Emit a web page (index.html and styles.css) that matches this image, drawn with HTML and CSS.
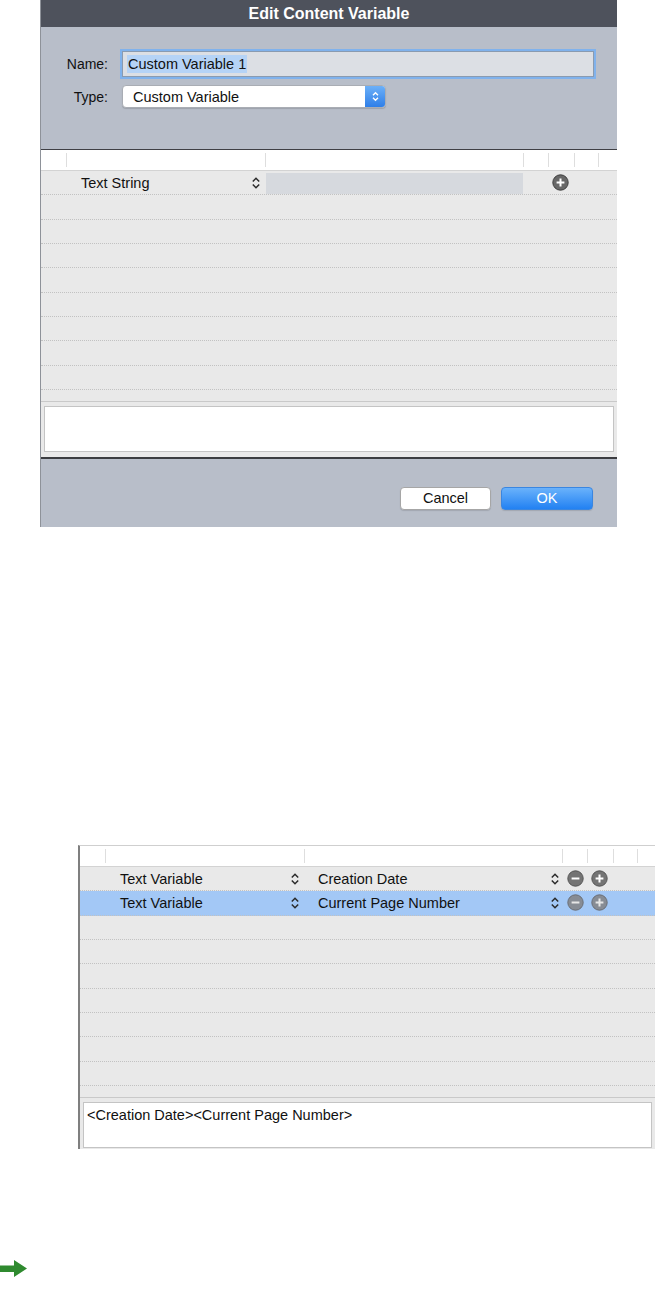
FILE: index.html
```html
<!DOCTYPE html>
<html lang="en">
<head>
    <meta charset="UTF-8">
    <title>Edit Content Variable</title>
    <link rel="stylesheet" href="styles.css">
</head>
<body>
    <div class="dialog">
        <div class="titlebar">Edit Content Variable</div>

        <div class="form">
            <div class="form-row">
                <label>Name:</label>
                <div class="text-field"><span class="sel">Custom Variable 1</span></div>
            </div>
            <div class="form-row">
                <label>Type:</label>
                <div class="popup">
                    <span class="popup-label">Custom Variable</span>
                    <span class="popup-arrows">
                        <svg width="9" height="13" viewBox="0 0 9 13"><path d="M2 5.2 4.5 2.7 7 5.2M2 7.8 4.5 10.3 7 7.8" fill="none" stroke="#fff" stroke-width="1.4"/></svg>
                    </span>
                </div>
            </div>
        </div>

        <div class="var-table">
            <div class="grid-header">
                <span></span><span></span><span></span><span></span><span></span><span></span><span></span>
            </div>
            <div class="row">
                <span class="cell-kind">Text String</span>
                <span class="updown"><svg width="10" height="14" viewBox="0 0 10 14"><path d="M1.8 5.5 5 2.3 8.2 5.5M1.8 8.5 5 11.7 8.2 8.5" fill="none" stroke="#2a2a2a" stroke-width="1.5"/></svg></span>
                <span class="cell-value field"></span>
                <span class="row-btns">
                    <svg class="circle-btn" width="17" height="17" viewBox="0 0 17 17"><circle cx="8.5" cy="8.5" r="7.7" fill="#686868" stroke="#3e3e3e" stroke-width="1"/><path d="M8.5 4.6v7.8M4.6 8.5h7.8" stroke="#fff" stroke-width="2"/></svg>
                </span>
            </div>
            <div class="row"></div>
            <div class="row"></div>
            <div class="row"></div>
            <div class="row"></div>
            <div class="row"></div>
            <div class="row"></div>
            <div class="row"></div>
            <div class="row"></div>
            <div class="row-fill"></div>
            <div class="preview"></div>
        </div>

        <div class="footer">
            <button class="btn">Cancel</button>
            <button class="btn ok">OK</button>
        </div>
    </div>

    <div class="var-table detail">
        <div class="grid-header">
            <span></span><span></span><span></span><span></span><span></span><span></span><span></span>
        </div>
        <div class="row">
            <span class="cell-kind">Text Variable</span>
            <span class="updown"><svg width="10" height="14" viewBox="0 0 10 14"><path d="M1.8 5.5 5 2.3 8.2 5.5M1.8 8.5 5 11.7 8.2 8.5" fill="none" stroke="#2a2a2a" stroke-width="1.5"/></svg></span>
            <span class="cell-value">
                Creation Date
                <svg width="10" height="14" viewBox="0 0 10 14"><path d="M1.8 5.5 5 2.3 8.2 5.5M1.8 8.5 5 11.7 8.2 8.5" fill="none" stroke="#2a2a2a" stroke-width="1.5"/></svg>
            </span>
            <span class="row-btns">
                <svg class="circle-btn" width="17" height="17" viewBox="0 0 17 17"><circle cx="8.5" cy="8.5" r="7.7" fill="#747474" stroke="#555" stroke-width="1"/><path d="M4.6 8.5h7.8" stroke="#fff" stroke-width="2"/></svg>
                <svg class="circle-btn" width="17" height="17" viewBox="0 0 17 17"><circle cx="8.5" cy="8.5" r="7.7" fill="#747474" stroke="#555" stroke-width="1"/><path d="M8.5 4.6v7.8M4.6 8.5h7.8" stroke="#fff" stroke-width="2"/></svg>
            </span>
        </div>
        <div class="row selected">
            <span class="cell-kind">Text Variable</span>
            <span class="updown"><svg width="10" height="14" viewBox="0 0 10 14"><path d="M1.8 5.5 5 2.3 8.2 5.5M1.8 8.5 5 11.7 8.2 8.5" fill="none" stroke="#2a2a2a" stroke-width="1.5"/></svg></span>
            <span class="cell-value">
                Current Page Number
                <svg width="10" height="14" viewBox="0 0 10 14"><path d="M1.8 5.5 5 2.3 8.2 5.5M1.8 8.5 5 11.7 8.2 8.5" fill="none" stroke="#2a2a2a" stroke-width="1.5"/></svg>
            </span>
            <span class="row-btns">
                <svg class="circle-btn" width="17" height="17" viewBox="0 0 17 17"><circle cx="8.5" cy="8.5" r="7.7" fill="#878c94" stroke="#6a6e75" stroke-width="1"/><path d="M4.6 8.5h7.8" stroke="#e6e6e6" stroke-width="2"/></svg>
                <svg class="circle-btn" width="17" height="17" viewBox="0 0 17 17"><circle cx="8.5" cy="8.5" r="7.7" fill="#878c94" stroke="#6a6e75" stroke-width="1"/><path d="M8.5 4.6v7.8M4.6 8.5h7.8" stroke="#e6e6e6" stroke-width="2"/></svg>
            </span>
        </div>
        <div class="row"></div>
        <div class="row"></div>
        <div class="row"></div>
        <div class="row"></div>
        <div class="row"></div>
        <div class="row"></div>
        <div class="row"></div>
        <div class="row-fill"></div>
        <div class="preview">&lt;Creation Date&gt;&lt;Current Page Number&gt;</div>
    </div>

    <div class="next-arrow">
        <svg width="28" height="20" viewBox="0 0 28 20"><path d="M0 6.5h14V1l13 8.5-13 8.5v-5H0z" fill="#2f8a2f"/></svg>
    </div>
</body>
</html>
```

FILE: styles.css
```css
* {
    margin: 0;
    padding: 0;
    box-sizing: border-box;
}

body {
    font-family: "Liberation Sans", Arial, Helvetica, sans-serif;
    background: #fff;
    color: #111;
    width: 655px;
    overflow: hidden;
}

/* dialog */

.dialog {
    margin-left: 40px;
    width: 577px;
    height: 527px;
    background: #b8bec9;
    border-left: 1px solid #8e9299;
    display: flex;
    flex-direction: column;
}

.titlebar {
    height: 27px;
    background: #4e525c;
    color: #fff;
    font-size: 16px;
    font-weight: bold;
    display: flex;
    align-items: center;
    justify-content: center;
}

.form {
    height: 122px;
    padding-top: 24px;
    display: flex;
    flex-direction: column;
    gap: 8px;
}

.form-row {
    display: flex;
    align-items: center;
    gap: 14px;
}

.form-row label {
    width: 67px;
    text-align: right;
    font-size: 14px;
}

.text-field {
    width: 472px;
    height: 26px;
    background: #dcdfe4;
    border: 1px solid #8a9bb0;
    box-shadow: 0 0 0 2px #80b2ec;
    display: flex;
    align-items: center;
    padding-left: 4px;
    font-size: 14.5px;
}

.text-field .sel {
    background: #b5d3f6;
    padding: 1px 1px;
}

.popup {
    width: 264px;
    height: 23px;
    background: #fff;
    border: 1px solid #a9adb4;
    border-radius: 4px;
    box-shadow: 0 1px 1px rgba(0,0,0,0.15);
    display: flex;
    align-items: center;
    justify-content: space-between;
    font-size: 14.5px;
    overflow: hidden;
}

.popup-label {
    padding-left: 10px;
}

.popup-arrows {
    width: 20px;
    height: 100%;
    background: linear-gradient(#6cb0f8 0%, #2f7fe8 100%);
    display: flex;
    align-items: center;
    justify-content: center;
}

/* variable table */

.var-table {
    background: #e9e9e9;
    display: flex;
    flex-direction: column;
}

.dialog .var-table {
    border-top: 1px solid #3f4045;
    border-bottom: 2px solid #3b3c40;
}

.grid-header {
    height: 21px;
    background: #fff;
    border-bottom: 1px solid #d3d3d3;
    display: grid;
    grid-template-columns: 25px 199px 258px 25px 26px 24px 1fr;
    padding: 3px 0;
}

.grid-header span + span {
    border-left: 1px solid #dedede;
}

.row {
    height: 24.33px;
    border-bottom: 1px dotted #c2c2c2;
    display: flex;
    align-items: center;
    padding-left: 40px;
    font-size: 14.5px;
}

.row.selected {
    background: #a3c8f6;
}

.cell-kind {
    width: 169px;
}

.updown {
    width: 12px;
    display: flex;
    justify-content: center;
}

.updown svg,
.cell-value svg {
    display: block;
}

.cell-value {
    width: 257px;
    margin-left: 4px;
    display: flex;
    align-items: center;
    justify-content: space-between;
    padding: 0 2px 0 13px;
}

.cell-value.field {
    align-self: flex-start;
    margin-top: 2px;
    height: 21px;
    background: #d6d9de;
}

.row-btns {
    display: flex;
    align-items: center;
    justify-content: flex-end;
    gap: 7px;
    width: 46px;
}

.circle-btn {
    display: block;
}

.row-fill {
    height: 12px;
    border-bottom: 1px solid #c9c9c9;
}

.preview {
    height: 46px;
    margin: 4px 3px 5px 3px;
    background: #fff;
    border: 1px solid #c4c4c4;
    padding: 4px 3px;
    font-size: 14.5px;
    line-height: 17px;
}

/* footer */

.footer {
    flex: 1;
    display: flex;
    justify-content: flex-end;
    align-items: flex-start;
    gap: 10px;
    padding: 28px 24px 0 0;
}

.btn {
    width: 91px;
    height: 23px;
    background: #fff;
    border: 1px solid #a6a6a6;
    border-radius: 4px;
    box-shadow: 0 1px 1px rgba(0,0,0,0.12);
    font-family: inherit;
    font-size: 14.5px;
    color: #111;
}

.btn.ok {
    width: 92px;
    background: linear-gradient(#6ab2fb 0%, #2281f2 100%);
    border-color: #3a86e0;
    color: #fff;
}

/* second shot: the table after adding variables */

.var-table.detail {
    margin: 318px 0 0 78px;
    width: 577px;
    border-left: 2px solid #7f7f7f;
    border-top: 1px solid #cfcfcf;
}

.var-table.detail .preview {
    margin-bottom: 1px;
}

.next-arrow {
    margin-top: 110px;
    height: 20px;
}

.next-arrow svg {
    display: block;
}
```
